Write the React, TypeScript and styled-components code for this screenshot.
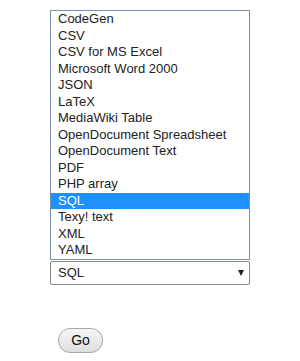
import React from "react";
import styled, { createGlobalStyle } from "styled-components";

const GlobalStyle = createGlobalStyle`
    html, body {
        margin: 0;
        padding: 0;
        background: #ffffff;
    }
    body {
        font-family: "Liberation Sans", Arial, sans-serif;
        color: #222;
    }
`

const Page = styled.div`
    width: 300px;
    height: 361px;
    padding: 10px 0 0 50px;
    box-sizing: border-box;
    display: flex;
    flex-direction: column;
`
const Field = styled.div`
    display: flex;
    flex-direction: column;
    width: 200px;
    gap: 1px;
`
const List = styled.ul`
    margin: 0;
    padding: 0;
    list-style: none;
    border: 1px solid #7f8fad;
    background: #fff;
`
const Option = styled.li<{ $selected?: boolean }>`
    font-size: 13px;
    line-height: 16.5px;
    height: 16.5px;
    padding-left: 7px;
    white-space: nowrap;
    color: ${p => (p.$selected ? "#fff" : "#222")};
    background: ${p => (p.$selected ? "#1e90ff" : "transparent")};
`
const Select = styled.div`
    height: 24px;
    box-sizing: border-box;
    border: 1px solid #8a8a8a;
    border-radius: 2px;
    display: flex;
    align-items: center;
    justify-content: space-between;
    padding: 0 5px 0 7px;
    font-size: 13px;
    color: #222;
`
const Arrow = styled.span`
    width: 0;
    height: 0;
    border-left: 3.5px solid transparent;
    border-right: 3.5px solid transparent;
    border-top: 6px solid #222;
    margin-top: 1px;
`
const GoButton = styled.button`
    margin: 43px 0 0 8px;
    align-self: flex-start;
    width: 45px;
    height: 25px;
    border: 1px solid #a9a9a9;
    border-radius: 12px;
    background: linear-gradient(#f6f6f6, #dedede);
    font-family: "Liberation Sans", Arial, sans-serif;
    font-size: 14px;
    color: #111;
    padding: 0;
`

const formats = [
    "CodeGen",
    "CSV",
    "CSV for MS Excel",
    "Microsoft Word 2000",
    "JSON",
    "LaTeX",
    "MediaWiki Table",
    "OpenDocument Spreadsheet",
    "OpenDocument Text",
    "PDF",
    "PHP array",
    "SQL",
    "Texy! text",
    "XML",
    "YAML",
]

export default function App() {
    const selected = "SQL"
    return (
        <>
            <GlobalStyle />
            <Page>
                <Field>
                    <List>
                        {formats.map(f => (
                            <Option key={f} $selected={f === selected}>{f}</Option>
                        ))}
                    </List>
                    <Select>
                        <span>{selected}</span>
                        <Arrow />
                    </Select>
                </Field>
                <GoButton>Go</GoButton>
            </Page>
        </>
    )
}
